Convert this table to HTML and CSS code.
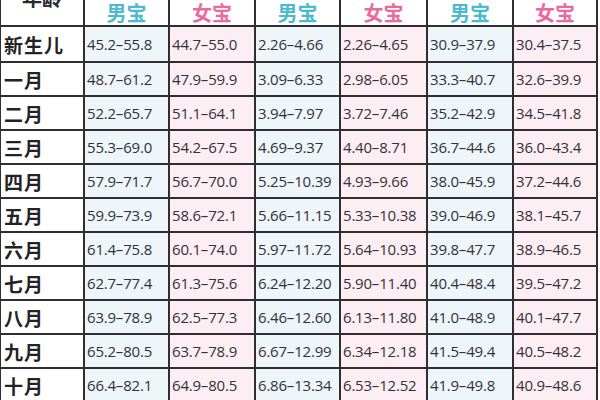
FILE: index.html
```html
<!DOCTYPE html>
<html lang="zh">
<head>
<meta charset="utf-8">
<link rel="stylesheet" href="styles.css">
</head>
<body>
<table class="chart">
  <colgroup>
    <col class="c-age"><col class="c1"><col class="c2"><col class="c3"><col class="c4"><col class="c5"><col class="c6">
  </colgroup>
  <thead>
    <tr>
      <th class="age-head">年龄</th>
      <th class="boy">男宝</th><th class="girl">女宝</th>
      <th class="boy">男宝</th><th class="girl">女宝</th>
      <th class="boy">男宝</th><th class="girl">女宝</th>
    </tr>
  </thead>
  <tbody>
    <tr class="first"><th>新生儿</th><td class="b">45.2–55.8</td><td class="g">44.7–55.0</td><td class="b">2.26–4.66</td><td class="g">2.26–4.65</td><td class="b">30.9–37.9</td><td class="g">30.4–37.5</td></tr>
    <tr><th>一月</th><td class="b">48.7–61.2</td><td class="g">47.9–59.9</td><td class="b">3.09–6.33</td><td class="g">2.98–6.05</td><td class="b">33.3–40.7</td><td class="g">32.6–39.9</td></tr>
    <tr><th>二月</th><td class="b">52.2–65.7</td><td class="g">51.1–64.1</td><td class="b">3.94–7.97</td><td class="g">3.72–7.46</td><td class="b">35.2–42.9</td><td class="g">34.5–41.8</td></tr>
    <tr><th>三月</th><td class="b">55.3–69.0</td><td class="g">54.2–67.5</td><td class="b">4.69–9.37</td><td class="g">4.40–8.71</td><td class="b">36.7–44.6</td><td class="g">36.0–43.4</td></tr>
    <tr><th>四月</th><td class="b">57.9–71.7</td><td class="g">56.7–70.0</td><td class="b">5.25–10.39</td><td class="g">4.93–9.66</td><td class="b">38.0–45.9</td><td class="g">37.2–44.6</td></tr>
    <tr><th>五月</th><td class="b">59.9–73.9</td><td class="g">58.6–72.1</td><td class="b">5.66–11.15</td><td class="g">5.33–10.38</td><td class="b">39.0–46.9</td><td class="g">38.1–45.7</td></tr>
    <tr><th>六月</th><td class="b">61.4–75.8</td><td class="g">60.1–74.0</td><td class="b">5.97–11.72</td><td class="g">5.64–10.93</td><td class="b">39.8–47.7</td><td class="g">38.9–46.5</td></tr>
    <tr><th>七月</th><td class="b">62.7–77.4</td><td class="g">61.3–75.6</td><td class="b">6.24–12.20</td><td class="g">5.90–11.40</td><td class="b">40.4–48.4</td><td class="g">39.5–47.2</td></tr>
    <tr><th>八月</th><td class="b">63.9–78.9</td><td class="g">62.5–77.3</td><td class="b">6.46–12.60</td><td class="g">6.13–11.80</td><td class="b">41.0–48.9</td><td class="g">40.1–47.7</td></tr>
    <tr><th>九月</th><td class="b">65.2–80.5</td><td class="g">63.7–78.9</td><td class="b">6.67–12.99</td><td class="g">6.34–12.18</td><td class="b">41.5–49.4</td><td class="g">40.5–48.2</td></tr>
    <tr><th>十月</th><td class="b">66.4–82.1</td><td class="g">64.9–80.5</td><td class="b">6.86–13.34</td><td class="g">6.53–12.52</td><td class="b">41.9–49.8</td><td class="g">40.9–48.6</td></tr>
  </tbody>
</table>
</body>
</html>
```

FILE: styles.css
```css
html, body {
  margin: 0;
  padding: 0;
  background: #ffffff;
  overflow: hidden;
}

.chart {
  border-collapse: collapse;
  table-layout: fixed;
  width: 597px;
  margin-top: -16px;
  margin-left: -1px;
  font-family: "Open Sans", "Noto Sans", "Noto Sans CJK SC", sans-serif;
  color: #33313a;
}

.c-age { width: 84px; }
.c1 { width: 85px; }
.c2 { width: 86px; }
.c3 { width: 85px; }
.c4 { width: 87px; }
.c5 { width: 86px; }
.c6 { width: 84px; }

.chart th,
.chart td {
  border: 2px solid #2f2f33;
  padding: 0 0 0 2px;
  white-space: nowrap;
  overflow: hidden;
}

.chart thead tr { height: 41px; }
.chart tbody tr { height: 34px; }
.chart tbody tr.first { height: 36px; }

.chart thead th {
  font-family: "Noto Sans CJK SC", sans-serif;
  font-weight: 700;
  font-size: 20px;
  text-align: center;
  line-height: 20px;
  vertical-align: top;
  padding: 17px 0 0 0;
}

.chart thead th.age-head {
  color: #2a2a2e;
  padding-top: 2px;
}

.chart .boy { color: #4cb9cf; }
.chart .girl { color: #ea6a9f; }

.chart tbody th {
  font-family: "Noto Sans CJK SC", sans-serif;
  font-weight: 700;
  font-size: 19px;
  text-align: left;
  padding-left: 3px;
  color: #232326;
  background: #ffffff;
  letter-spacing: 1px;
}

.chart td {
  font-size: 15px;
  letter-spacing: -0.2px;
  text-align: left;
  vertical-align: middle;
}

.chart td.b { background: #eef6fa; }
.chart td.g { background: #fdeef3; }
```
